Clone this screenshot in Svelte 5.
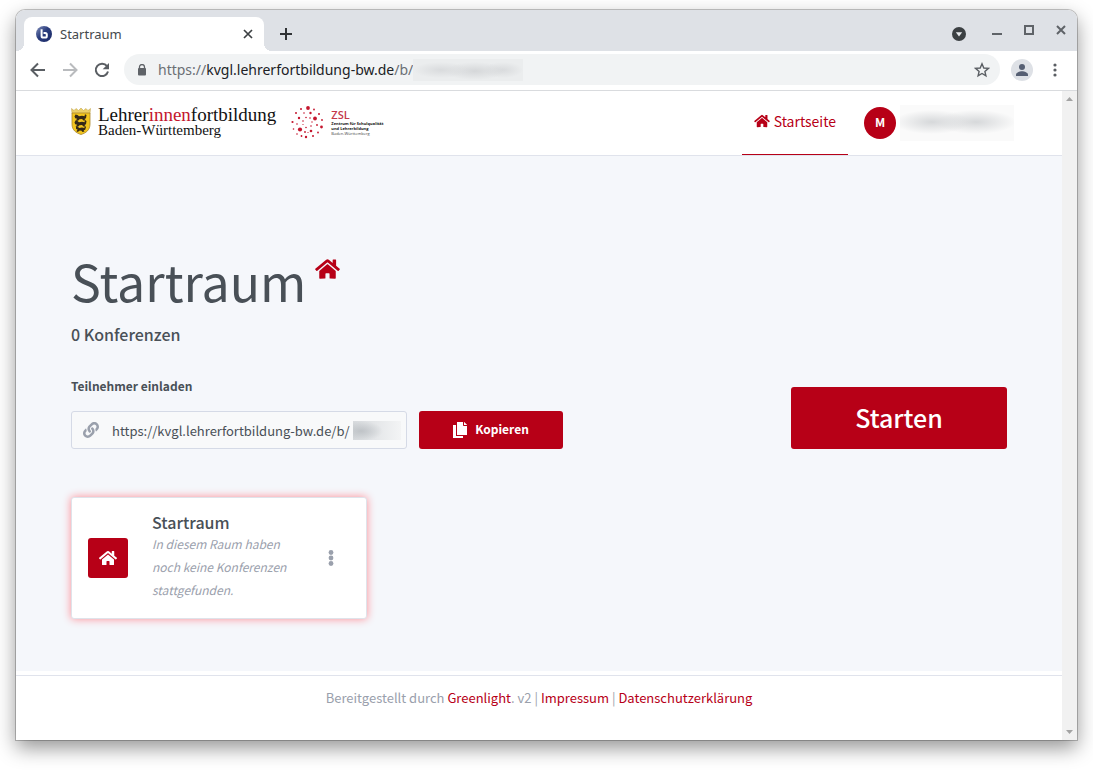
<script>
  const HOME =
    'M280.37 148.26L96 300.11V464a16 16 0 0 0 16 16l112.06-.29a16 16 0 0 0 15.92-16V368a16 16 0 0 1 16-16h64a16 16 0 0 1 16 16v95.64a16 16 0 0 0 16 16.05L464 480a16 16 0 0 0 16-16V300L295.67 148.26a12.19 12.19 0 0 0-15.3 0zM571.6 251.47L488 182.56V44.05a12 12 0 0 0-12-12h-56a12 12 0 0 0-12 12v72.61L318.47 43a48 48 0 0 0-61 0L4.34 251.47a12 12 0 0 0-1.6 16.9l25.5 31A12 12 0 0 0 45.15 301l235.22-193.74a12.19 12.19 0 0 1 15.3 0L530.9 301a12 12 0 0 0 16.9-1.6l25.5-31a12 12 0 0 0-1.7-16.93z';

  // Dots of the ZSL emblem: x, y, radius
  const dots = [
    [17, 2, 1.9], [10, 3, 1], [23, 3.5, 0.9], [5, 7, 1], [28, 8, 1], [1.5, 16, 1.1],
    [31, 14, 0.9], [30.5, 21, 1.4], [2.5, 23, 0.8], [27, 26.5, 0.9], [6, 28, 0.8],
    [10.5, 30, 0.9], [15, 31, 1.2], [22, 30, 1], [13, 7, 0.8], [19.5, 7, 1.2],
    [24, 12.5, 1.9], [8, 12, 1.2], [6, 18, 0.8], [9, 23.5, 2.1], [14, 26, 0.9],
    [20, 25, 1.3], [26, 19, 0.9], [12, 15, 0.8], [15, 11.5, 0.8], [19, 12, 0.8],
    [21, 16, 0.7], [20, 20, 0.8], [15, 21.5, 0.8], [12, 18.5, 0.6], [17, 26.5, 0.6]
  ];
</script>

{#snippet home()}
  <svg class="home" viewBox="0 0 576 512" aria-hidden="true"><path fill="currentColor" d={HOME} /></svg>
{/snippet}

<div class="desktop">
  <div class="window">
    <div class="tabs">
      <div class="tab">
        <svg width="16" height="16" viewBox="0 0 16 16" aria-hidden="true">
          <defs>
            <linearGradient id="fav" x1="0" y1="0" x2="1" y2="1">
              <stop offset="0" stop-color="#8492bd" />
              <stop offset=".45" stop-color="#2a3c7c" />
              <stop offset="1" stop-color="#1b2a66" />
            </linearGradient>
          </defs>
          <circle cx="8" cy="8" r="8" fill="url(#fav)" />
          <path d="M5.6 3.2v6.8q0 1.6 1.6 1.6h2q1.6 0 1.6-1.600V8.500q0-1.600-1.600-1.600H7.500" fill="none" stroke="#fff" stroke-width="2" />
        </svg>
        <span class="tabname">Startraum</span>
        <button class="icon" aria-label="Tab schließen">
          <svg width="10" height="10" viewBox="0 0 10 10"><path d="M1 1l8 8M9 1L1 9" stroke="#3c4043" stroke-width="1.700" /></svg>
        </button>
      </div>
      <button class="icon newtab" aria-label="Neuer Tab">
        <svg width="12" height="12" viewBox="0 0 12 12"><path d="M6 0v12M0 6h12" stroke="#303336" stroke-width="2" /></svg>
      </button>
      <div class="controls">
        <button class="icon search" aria-label="Tabs durchsuchen">
          <svg width="14" height="14" viewBox="0 0 14 14"><circle cx="7" cy="7" r="7" fill="#3c4043" /><path d="M3.800 5.200h6.400L7 9.500z" fill="#e8eaed" /></svg>
        </button>
        <button class="icon" aria-label="Minimieren">
          <svg width="12" height="12" viewBox="0 0 12 12"><path d="M1 10h10" stroke="#5f6368" stroke-width="2" /></svg>
        </button>
        <button class="icon" aria-label="Maximieren">
          <svg width="12" height="12" viewBox="0 0 12 12"><path d="M2 2h8v8H2z" fill="none" stroke="#5f6368" stroke-width="2" /></svg>
        </button>
        <button class="icon" aria-label="Schließen">
          <svg width="12" height="12" viewBox="0 0 12 12"><path d="M2 2l8 8M10 2l-8 8" stroke="#5f6368" stroke-width="2" /></svg>
        </button>
      </div>
    </div>

    <div class="toolbar">
      <button class="icon" aria-label="Zurück">
        <svg width="16" height="16" viewBox="0 0 16 16"><path d="M15 8H2M8 1.500L1.500 8 8 14.500" fill="none" stroke="#5a5e63" stroke-width="2" /></svg>
      </button>
      <button class="icon" aria-label="Vorwärts">
        <svg width="16" height="16" viewBox="0 0 16 16"><path d="M1 8h13M8 1.500L14.500 8 8 14.500" fill="none" stroke="#b9bbbe" stroke-width="2" /></svg>
      </button>
      <button class="icon" aria-label="Neu laden">
        <svg width="16" height="16" viewBox="0 0 16 16"><path d="M13 4.200A6.200 6.200 0 1 0 14 9.500" fill="none" stroke="#5a5e63" stroke-width="2" /><path d="M15 1v6.300H8.700z" fill="#5a5e63" /></svg>
      </button>
      <div class="address">
        <svg width="10" height="12" viewBox="0 0 10 12" aria-hidden="true"><path d="M2.500 5V3a2.500 2.500 0 0 1 5 0v2" fill="none" stroke="#5f6368" stroke-width="1.300" /><rect x="1" y="4" width="8" height="7.500" rx="1" fill="#5f6368" /></svg>
        <span class="url">https://<b>kvgl.lehrerfortbildung-bw.de</b>/b/</span><span class="veil veil-url"></span>
        <button class="icon star" aria-label="Lesezeichen">
          <svg width="16" height="16" viewBox="0 0 16 16"><path d="M8 1.800l1.800 4.200 4.600.4-3.500 3 1 4.500L8 11.500l-3.900 2.400 1-4.500-3.500-3 4.600-.4z" fill="none" stroke="#5a5e63" stroke-width="1.400" /></svg>
        </button>
      </div>
      <button class="icon profile" aria-label="Profil">
        <svg width="22" height="22" viewBox="0 0 22 22"><circle cx="11" cy="11" r="11" fill="#dee1e6" /><circle cx="11" cy="8" r="3" fill="#565f73" /><path d="M5 17v-1.500c0-2 3.500-3.300 6-3.300s6 1.300 6 3.300V17z" fill="#565f73" /></svg>
      </button>
      <button class="icon" aria-label="Menü">
        <svg width="4" height="14" viewBox="0 0 4 14"><g fill="#5a5e63"><circle cx="2" cy="2" r="1.600" /><circle cx="2" cy="7" r="1.600" /><circle cx="2" cy="12" r="1.600" /></g></svg>
      </button>
    </div>

    <div class="viewport">
      <div class="page">
        <header>
          <div class="container bar">
            <div class="brand">
              <svg width="20" height="28" viewBox="0 0 20 28" aria-hidden="true">
                <path d="M.5 1.500l2.500 2 2-2 2.500 2L10 1l2.500 2.500 2.500-2 2 2 2.500-2-.5 5H1z" fill="#ecd067" stroke="#b99a45" stroke-width=".5" />
                <path d="M1 6h18v11c0 6-4 9-9 10.500C5 26 1 23 1 17z" fill="#f2c51d" stroke="#aa862c" stroke-width=".8" />
                <g fill="#332817">
                  <path d="M4.500 7.500l2 .5 1.500 1.200 3-.4 2.500.5.500-2 1.500.8-.5 3.200-1.600.6 1.600 1.500-2.500.1-1.500-1.500-2.500.2-1.500 1.500H4.500l1.700-2-2-.5L3.500 9.500z" />
                  <path d="M4.500 13.500l2 .5 1.500 1.200 3-.4 2.500.5.500-2 1.500.8-.5 3.200-1.600.6 1.600 1.500-2.500.1-1.500-1.500-2.500.2-1.500 1.500H4.500l1.700-2-2-.5-.7-1.700z" />
                  <path d="M5 19.500l2 .5 1.300 1 2.700-.4 2.300.5.400-1.800 1.300.8-.8 2.700-1.600.5.900 1.200-2 .6-1.300-1.600-2.200.2-1 1.200-1.600-.7 1.300-1.500-1.700-1z" />
                </g>
              </svg>
              <div class="wordmark">
                <span class="word1">Lehrer<em>innen</em>fortbildung</span>
                <span class="word2">Baden-Württemberg</span>
              </div>
              <svg class="emblem" width="33" height="33" viewBox="0 0 33 33" aria-hidden="true">
                {#each dots as [x, y, r]}<circle cx={x} cy={y} {r} fill="#c4162e" />{/each}
              </svg>
              <div class="zsl">
                <span class="zname">ZSL</span>
                <span class="zline strong">Zentrum für Schulqualität</span>
                <span class="zline strong">und Lehrerbildung</span>
                <span class="zline">Baden-Württemberg</span>
              </div>
            </div>
            <nav>
              <a class="active" href="#start">{@render home()}Startseite</a>
              <button class="user" aria-label="Benutzerkonto"><span class="avatar">M</span><span class="veil veil-name"></span></button>
            </nav>
          </div>
        </header>

        <main>
          <div class="container">
            <div class="hero">
              <div>
                <div class="title"><h1>Startraum</h1>{@render home()}</div>
                <h2>0 Konferenzen</h2>
                <label for="invite">Teilnehmer einladen</label>
                <div class="invite">
                  <div class="field">
                    <svg width="16" height="16" viewBox="0 0 512 512" aria-hidden="true"><path fill="#9aa0ac" d="M326.612 185.391c59.747 59.809 58.927 155.698.36 214.590-.11.12-.24.25-.36.37l-67.200 67.200c-59.270 59.270-155.699 59.262-214.960 0-59.270-59.260-59.270-155.700 0-214.960l37.106-37.106c9.840-9.840 26.786-3.300 27.294 10.606.648 17.722 3.826 35.527 9.690 52.721 1.986 5.822.567 12.262-3.783 16.612l-13.087 13.087c-28.026 28.026-28.905 73.660-1.155 101.960 28.024 28.579 74.086 28.749 102.325.51l67.200-67.190c28.191-28.191 28.073-73.757 0-101.830-3.701-3.694-7.429-6.564-10.341-8.569a16.037 16.037 0 0 1-6.947-12.606c-.396-10.567 3.348-21.456 11.698-29.806l21.054-21.055c5.521-5.521 14.182-6.199 20.584-1.731a152.482 152.482 0 0 1 20.522 17.197zM467.547 44.449c-59.261-59.262-155.690-59.270-214.960 0l-67.200 67.200c-.12.12-.25.25-.36.37-58.566 58.892-59.387 154.781.36 214.590a152.454 152.454 0 0 0 20.521 17.196c6.402 4.468 15.064 3.789 20.584-1.731l21.054-21.055c8.350-8.350 12.094-19.239 11.698-29.806a16.037 16.037 0 0 0-6.947-12.606c-2.912-2.005-6.640-4.875-10.341-8.569-28.073-28.073-28.191-73.639 0-101.830l67.200-67.190c28.239-28.239 74.300-28.069 102.325.51 27.750 28.300 26.872 73.934-1.155 101.960l-13.087 13.087c-4.350 4.350-5.769 10.790-3.783 16.612 5.864 17.194 9.042 34.999 9.690 52.721.509 13.906 17.454 20.446 27.294 10.606l37.106-37.106c59.271-59.259 59.271-155.699.001-214.959z" /></svg>
                    <input id="invite" type="text" readonly value="https://kvgl.lehrerfortbildung-bw.de/b/" />
                    <span class="veil veil-field"></span>
                  </div>
                  <button class="primary copy">
                    <svg width="14" height="16" viewBox="0 0 448 512" aria-hidden="true"><path fill="#fff" d="M320 448v64H0V96h96v352h224zm0-344V0H128v416h320V128H344c-13.200 0-24-10.800-24-24zM448 90L358 0h-6v96h96z" /></svg><span>Kopieren</span>
                  </button>
                </div>
              </div>
              <button class="primary start">Starten</button>
            </div>

            <div class="rooms">
              <article>
                <span class="badge">{@render home()}</span>
                <div class="room">
                  <h3>Startraum</h3>
                  <p>In diesem Raum haben noch keine Konferenzen stattgefunden.</p>
                </div>
                <button class="icon more" aria-label="Raumoptionen">
                  <svg width="6" height="16" viewBox="0 0 6 16"><g fill="#9aa0ac"><circle cx="3" cy="2.500" r="2.400" /><circle cx="3" cy="8" r="2.400" /><circle cx="3" cy="13.500" r="2.400" /></g></svg>
                </button>
              </article>
            </div>
          </div>
        </main>

        <footer>
          Bereitgestellt durch <a href="#greenlight">Greenlight</a>. v2 | <a href="#impressum">Impressum</a> | <a href="#datenschutz">Datenschutzerklärung</a>
        </footer>
      </div>
      <div class="scroll" aria-hidden="true">
        <svg width="7" height="4" viewBox="0 0 7 4"><path d="M0 4L3.500 0 7 4z" fill="#a3a3a3" /></svg>
        <svg width="7" height="4" viewBox="0 0 7 4"><path d="M0 0h7L3.500 4z" fill="#a3a3a3" /></svg>
      </div>
    </div>
  </div>
</div>

<style>
  :global(body) { margin: 0; background: #fff; }
  * { box-sizing: border-box; }
  svg { display: block; flex: none; }
  button { font: inherit; cursor: pointer; border: 0; padding: 0; background: none; }
  a { color: #b70017; text-decoration: none; }
  h1, h2, h3, p { margin: 0; }
  .icon { display: flex; align-items: center; justify-content: center; flex: none; }

  .desktop { min-height: 100vh; padding: 10px 16px 32px; display: flex; overflow: hidden; }
  .window {
    flex: 1; min-width: 0; display: flex; flex-direction: column;
    border-radius: 9px 9px 0 0; background: #fff;
    box-shadow: 0 0 0 1px rgba(0, 0, 0, .22), 0 8px 20px rgba(0, 0, 0, .42);
    font-family: "Noto Sans CJK SC", "Noto Sans", sans-serif;
    color: #495057; font-size: 14px;
  }

  .tabs { display: flex; height: 41px; background: #dee1e6; border-radius: 9px 9px 0 0; padding-left: 8px; font-family: "Noto Sans", sans-serif; }
  .tab { display: flex; align-items: center; gap: 8px; width: 240px; margin-top: 7px; padding: 0 11px 0 12px; background: #fff; border-radius: 8px 8px 0 0; font-size: 13px; color: #45494d; position: relative; }
  .tab::before, .tab::after { content: ""; position: absolute; bottom: 0; width: 8px; height: 8px; }
  .tab::before { left: -8px; background: radial-gradient(circle at 0 0, transparent 8px, #fff 8px); }
  .tab::after { right: -8px; background: radial-gradient(circle at 100% 0, transparent 8px, #fff 8px); }
  .tabname { flex: 1; }
  .newtab { margin: 7px 0 0 16px; }
  .controls { margin-left: auto; display: flex; gap: 20px; padding: 0 10px 2px 0; align-items: center; }
  .search { margin: 9px 5px 0 0; }

  .toolbar { display: flex; align-items: center; gap: 16px; height: 40px; padding: 0 20px 2px 14px; border-bottom: 1px solid #d9dbde; font-family: "Noto Sans", sans-serif; }
  .toolbar > .profile { margin: 0 4px 0 -5px; }
  .address { flex: 1; min-width: 0; display: flex; align-items: center; height: 31px; margin-left: -2px; padding: 0 10px 0 13px; border-radius: 16px; background: #f1f3f4; font-size: 14px; color: #6b6f74; }
  .url { margin-left: 11px; white-space: nowrap; }
  .url b { font-weight: 400; color: #202124; }
  .star { margin-left: auto; }

  .veil { flex: none; }
  .veil-url { width: 110px; height: 22px; background: radial-gradient(ellipse 28px 8px at 28px 11px, #d9dbdd, transparent), radial-gradient(ellipse 30px 9px at 62px 12px, #d5d7d9, transparent), radial-gradient(ellipse 20px 8px at 90px 11px, #d9dbdd, transparent), #ebedee; }
  .veil-name { width: 114px; height: 36px; background: radial-gradient(ellipse 38px 12px at 32px 17px, #d6d8da, transparent), radial-gradient(ellipse 40px 12px at 76px 17px, #d6d8da, transparent), #fafafa; }
  .veil-field { width: 48px; height: 19px; background: radial-gradient(ellipse 22px 10px at 8px 10px, #bfc3c7, transparent), linear-gradient(90deg, #d8dbde, #f3f4f5); }

  .viewport { flex: 1; display: flex; min-height: 0; }
  .page { flex: 1; min-width: 0; display: flex; flex-direction: column; }
  .scroll { width: 15px; flex: none; display: flex; flex-direction: column; justify-content: space-between; align-items: center; padding: 6px 0; background: #f1f1f1; }
  .container { width: 100%; max-width: 960px; margin: 0 auto; padding: 0 12px; }

  header { border-bottom: 1px solid #e0e3ec; }
  .bar { display: flex; justify-content: space-between; height: 64px; }
  .brand { display: flex; align-items: center; gap: 7px; padding-bottom: 4px; color: #111; white-space: nowrap; }
  .wordmark { display: flex; flex-direction: column; padding-top: 2px; font-family: "Liberation Serif", serif; }
  .word1 { font-size: 19px; line-height: 16px; }
  .word1 em { font-style: normal; color: #c4162e; }
  .word2 { font-size: 15px; line-height: 14px; }
  .emblem { margin: 3px 0 0 8px; }
  .zsl { display: flex; flex-direction: column; margin-top: 2px; font-family: "Open Sans", sans-serif; }
  .zname { font-size: 11px; line-height: 13px; font-weight: 600; color: #c4384a; }
  .zline { font-size: 4px; line-height: 5px; color: #444; }
  .strong { font-weight: 700; color: #111; }
  nav { display: flex; gap: 16px; }
  nav a { display: flex; align-items: center; gap: 4px; padding: 0 12px 4px; border-bottom: 1px solid #b70017; }
  .home { width: 16px; height: 14px; }
  .user { display: flex; align-items: center; gap: 4px; margin-right: -7px; }
  .avatar { width: 32px; height: 32px; border-radius: 50%; background: #b70017; color: #fff; font-size: 12px; line-height: 30px; font-weight: 700; }

  main { flex: 1; background: #f5f7fb; padding: 91px 0 52px; }
  .hero { display: flex; justify-content: space-between; align-items: flex-end; }
  .title { display: flex; align-items: flex-start; gap: 9px; }
  h1 { font-size: 50px; line-height: 66px; font-weight: 400; }
  .title .home { width: 25px; height: 22px; margin-top: 11px; color: #b70017; }
  h2 { margin-top: 9px; font-size: 16px; line-height: 24px; font-weight: 500; }
  label { display: block; margin-top: 29px; font-size: 12px; line-height: 22px; font-weight: 700; }
  .invite { display: flex; gap: 12px; margin-top: 14px; }
  .field { display: flex; align-items: center; width: 336px; height: 38px; padding: 0 5px 0 11px; border: 1px solid #d5dae6; border-radius: 3px; background: #f8f9fa; }
  .field input { flex: 1; min-width: 0; margin-left: 13px; padding: 0; border: 0; outline: 0; background: none; font: inherit; font-size: 13px; color: #495057; }
  .primary { background: #b70017; color: #fff; border-radius: 3px; }
  .copy { display: flex; align-items: center; justify-content: center; gap: 8px; width: 144px; font-size: 12px; line-height: 16px; font-weight: 700; }
  .copy span { padding-bottom: 2px; }
  .start { width: 216px; height: 62px; padding-bottom: 2px; font-size: 25px; line-height: 36px; font-weight: 500; }

  .rooms { display: grid; grid-template-columns: repeat(3, 1fr); gap: 24px; margin-top: 48px; }
  article { display: flex; align-items: center; padding: 15px 16px; border: 1px solid #dfe3ea; border-radius: 3px; background: #fff; box-shadow: 0 0 8px #ff8c94; }
  .badge { display: grid; place-items: center; width: 40px; height: 40px; border-radius: 3px; background: #b70017; color: #fff; flex: none; }
  .badge .home { width: 18px; height: 16px; }
  .room { flex: 1; margin-left: 24px; padding-bottom: 2px; }
  h3 { font-size: 16px; line-height: 19px; font-weight: 500; }
  .room p { max-width: 144px; font-size: 12px; line-height: 23px; font-style: italic; color: #9aa0ac; }
  .more { width: 38px; height: 38px; }

  footer { margin-top: 4px; border-top: 1px solid #e0e3ec; height: 65px; padding-top: 11px; text-align: center; font-size: 13px; line-height: 22px; color: #9aa0ac; }
</style>
